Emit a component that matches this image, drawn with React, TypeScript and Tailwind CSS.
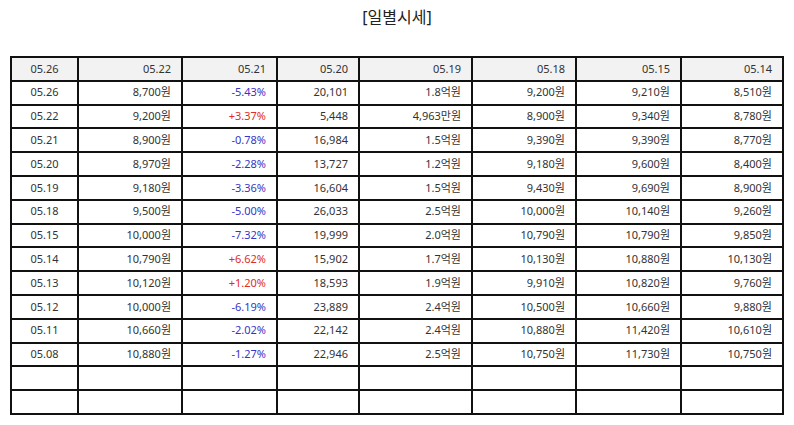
import React from "react";

type Row = [string, string, string, string, string, string, string, string];

const header: string[] = ["05.26", "05.22", "05.21", "05.20", "05.19", "05.18", "05.15", "05.14"];

const rows: Row[] = [
  ["05.26", "8,700원", "-5.43%", "20,101", "1.8억원", "9,200원", "9,210원", "8,510원"],
  ["05.22", "9,200원", "+3.37%", "5,448", "4,963만원", "8,900원", "9,340원", "8,780원"],
  ["05.21", "8,900원", "-0.78%", "16,984", "1.5억원", "9,390원", "9,390원", "8,770원"],
  ["05.20", "8,970원", "-2.28%", "13,727", "1.2억원", "9,180원", "9,600원", "8,400원"],
  ["05.19", "9,180원", "-3.36%", "16,604", "1.5억원", "9,430원", "9,690원", "8,900원"],
  ["05.18", "9,500원", "-5.00%", "26,033", "2.5억원", "10,000원", "10,140원", "9,260원"],
  ["05.15", "10,000원", "-7.32%", "19,999", "2.0억원", "10,790원", "10,790원", "9,850원"],
  ["05.14", "10,790원", "+6.62%", "15,902", "1.7억원", "10,130원", "10,880원", "10,130원"],
  ["05.13", "10,120원", "+1.20%", "18,593", "1.9억원", "9,910원", "10,820원", "9,760원"],
  ["05.12", "10,000원", "-6.19%", "23,889", "2.4억원", "10,500원", "10,660원", "9,880원"],
  ["05.11", "10,660원", "-2.02%", "22,142", "2.4억원", "10,880원", "11,420원", "10,610원"],
  ["05.08", "10,880원", "-1.27%", "22,946", "2.5억원", "10,750원", "11,730원", "10,750원"],
];

// last column takes what is left
const widths = ["w-[67px]", "w-[104px]", "w-[95px]", "w-[82px]", "w-[113px]", "w-[104px]", "w-[105px]", ""];

function changeColor(v: string) {
  if (v.startsWith("+")) return "text-[#e02b2b]";
  if (v.startsWith("-")) return "text-[#3535c8]";
  return "text-[#333]";
}

export default function App() {
  return (
    <div className="w-[794px] h-[425px] bg-white text-[#333] font-['Noto_Sans','Noto_Sans_CJK_KR',sans-serif] overflow-hidden">
      <h1 className="pt-[5px] h-[56px] text-center text-[16px] leading-[24px] text-[#222]">[일별시세]</h1>
      <table className="ml-[10px] w-[774px] table-fixed border-collapse text-[11px]">
        <colgroup>
          {widths.map((w, i) => (
            <col key={i} className={w} />
          ))}
        </colgroup>
        <thead>
          <tr className="h-[23.8px] bg-[#f2f2f2]">
            {header.map((h, i) => (
              <th
                key={i}
                className={`border-2 border-[#111] font-normal p-0 px-[10px] ${i === 0 ? "text-center" : "text-right"}`}
              >
                {h}
              </th>
            ))}
          </tr>
        </thead>
        <tbody>
          {rows.map((r, ri) => (
            <tr key={ri} className="h-[23.8px]">
              {r.map((c, ci) => (
                <td
                  key={ci}
                  className={`border-2 border-[#111] p-0 px-[10px] ${ci === 0 ? "text-center" : "text-right"} ${
                    ci === 2 ? changeColor(c) : ""
                  }`}
                >
                  {c}
                </td>
              ))}
            </tr>
          ))}
          {[0, 1].map((k) => (
            <tr key={`e${k}`} className="h-[23.8px]">
              {header.map((_, ci) => (
                <td key={ci} className="border-2 border-[#111] p-0" />
              ))}
            </tr>
          ))}
        </tbody>
      </table>
    </div>
  );
}
